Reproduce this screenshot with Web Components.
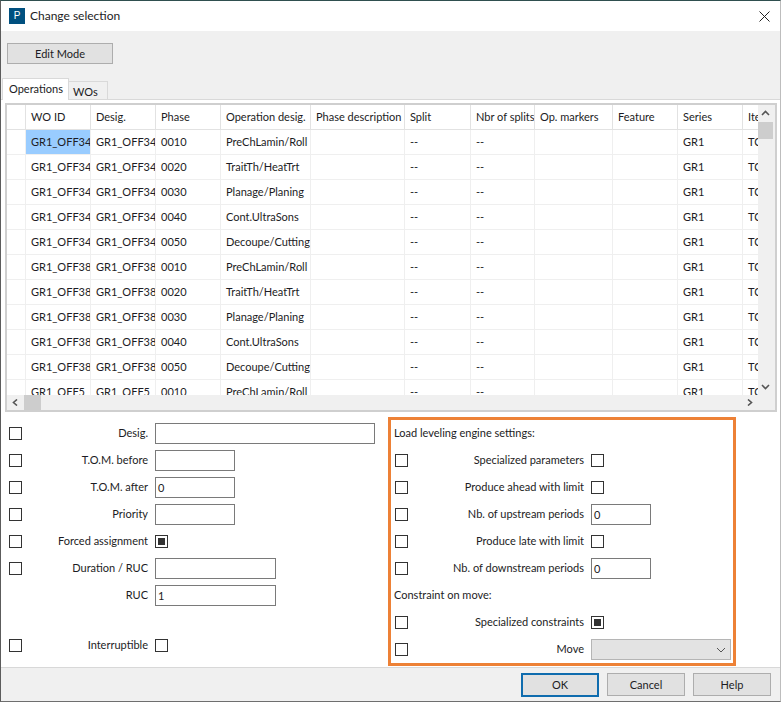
<!DOCTYPE html>
<html>
<head>
<meta charset="utf-8">
<title>Change selection</title>
<style>
  html, body { margin: 0; padding: 0; background: #fff; }
  body { font: 11px "Lato", "Open Sans", sans-serif; color: #1a1a1a; }
</style>
</head>
<body>
<sel-dialog></sel-dialog>

<script>
// small helper, every component sets its own shadow content
function shadow(el, html) {
  el.attachShadow({ mode: 'open' }).innerHTML = html;
}

const FONT = 'font: 11px/1 "Lato", "Open Sans", sans-serif; color: #1c1c24;';

class TitleBar extends HTMLElement {
  constructor() {
    super();
    shadow(this, `
      <style>
        :host { display: flex; align-items: center; height: 30px; background: #fff; ${FONT} font-size: 12px; }
        .logo { width: 16px; height: 16px; margin-left: 8px; background: #00507f; color: #fff; font: 10px/16px "Liberation Sans", sans-serif; text-align: center; }
        .name { margin-left: 5px; flex: 1; }
        svg { margin-right: 10px; }
      </style>
      <div class="logo">P</div>
      <div class="name"><slot></slot></div>
      <svg width="11" height="11" viewBox="0 0 11 11"><path d="M.5.5l10 10M10.500.5l-10 10" stroke="#222" stroke-width="1" fill="none"/></svg>
    `);
  }
}

class DlgButton extends HTMLElement {
  constructor() {
    super();
    shadow(this, `
      <style>
        :host { display: flex; align-items: center; justify-content: center; box-sizing: border-box; height: 23px; width: 78px;
          background: #e1e1e1; border: 1px solid #adadad; ${FONT} }
        :host([default]) { border: 2px solid #0f6cae; height: 24px; }
      </style>
      <slot></slot>
    `);
  }
}

class TabStrip extends HTMLElement {
  constructor() {
    super();
    shadow(this, `
      <style>
        :host { display: flex; align-items: flex-end; box-sizing: border-box; height: 21px; padding-left: 1px; ${FONT} border-bottom: 1px solid #d9d9d9; }
        div { box-sizing: border-box; display: flex; align-items: center; }
        .on { width: 67px; height: 22px; margin-bottom: -1px; background: #fff; border: 1px solid #d9d9d9; border-bottom: 0; padding: 0 0 2px 6px; }
        .off { width: 39px; height: 18px; background: #f0f0f0; border: 1px solid #d9d9d9; border-left: 0; border-bottom: 0; padding: 1px 0 0 4px; }
      </style>
      <div class="on">Operations</div>
      <div class="off">WOs</div>
    `);
  }
}

class ScrollBar extends HTMLElement {
  constructor() {
    super();
    const v = this.hasAttribute('vertical');
    shadow(this, `
      <style>
        :host { display: flex; flex-direction: ${v ? 'column' : 'row'}; background: #f0f0f0; }
        .arrow { flex: none; width: ${v ? 15 : 17}px; height: ${v ? 17 : 15}px; display: flex; align-items: center; justify-content: center; }
        .thumb { flex: none; background: #cdcdcd; ${v ? 'height: 17px; width: 15px;' : 'width: 17px; height: 15px;'} }
        .track { flex: 1; }
      </style>
      <div class="arrow"><svg width="9" height="7" viewBox="0 0 9 7">
        <path d="${v ? 'M1 5l3.500-3.500L8 5' : 'M6 .5L2.500 3.500 6 6.500'}" fill="none" stroke="#555" stroke-width="1.600"/></svg></div>
      <div class="thumb"></div>
      <div class="track"></div>
      <div class="arrow"><svg width="9" height="7" viewBox="0 0 9 7">
        <path d="${v ? 'M1 2l3.500 3.500L8 2' : 'M3 .5L6.500 3.500 3 6.500'}" fill="none" stroke="#555" stroke-width="1.600"/></svg></div>
    `);
  }
}

// widths of the columns, the row header first
const COLS = [19, 65, 65, 65, 90, 94, 66, 64, 78, 65, 65, 60];
const HEADS = ['', 'WO ID', 'Desig.', 'Phase', 'Operation desig.', 'Phase description', 'Split', 'Nbr of splits', 'Op. markers', 'Feature', 'Series', 'Item'];
const OPS = ['PreChLamin/Roll', 'TraitTh/HeatTrt', 'Planage/Planing', 'Cont.UltraSons', 'Decoupe/Cutting'];
const PHASES = ['0010', '0020', '0030', '0040', '0050'];

class OpGrid extends HTMLElement {
  constructor() {
    super();
    const tpl = COLS.map(w => w + 'px').join(' ');
    let rows = '';
    const all = [];
    for (const wo of ['GR1_OFF34', 'GR1_OFF38']) {
      OPS.forEach((op, i) => all.push([wo, PHASES[i], op]));
    }
    all.push(['GR1_OFF5', '0010', OPS[0]]);
    all.forEach((r, idx) => {
      const cells = ['', r[0], r[0], r[1], r[2], '', '--', '--', '', '', 'GR1', 'TC'];
      rows += `<div class="row">` + cells.map((c, i) =>
        `<div class="cell${idx === 0 && i === 1 ? ' cur' : ''}">${c}</div>`).join('') + `</div>`;
    });
    shadow(this, `
      <style>
        :host { display: grid; grid-template-columns: 1fr 17px; grid-template-rows: 1fr 15px; box-sizing: border-box;
          height: 309px; border: 2px solid #cfcfcf; ${FONT} background: #fff; }
        .view { overflow: hidden; min-width: 0; min-height: 0; }
        .row { display: grid; grid-template-columns: ${tpl}; height: 25px; }
        .cell { box-sizing: border-box; white-space: nowrap; overflow: hidden; padding: 0 0 0 5px; line-height: 24px;
          border-right: 1px solid #efefef; border-bottom: 1px solid #efefef; }
        .row.head .cell { height: 25px; line-height: 23px; border-right-color: #e2e2e2; border-bottom-color: #e2e2e2; }
        .cur { background: #99ccff; }
        .corner { background: #f0f0f0; }
      </style>
      <div class="view">
        <div class="row head">${HEADS.map(h => `<div class="cell">${h}</div>`).join('')}</div>
        ${rows}
      </div>
      <scroll-bar vertical></scroll-bar>
      <scroll-bar></scroll-bar>
      <div class="corner"></div>
    `);
  }
}

class CheckBox extends HTMLElement {
  constructor() {
    super();
    shadow(this, `
      <style>
        :host { display: inline-flex; flex: none; box-sizing: border-box; width: 13px; height: 13px; border: 1px solid #333; background: #fff;
          align-items: center; justify-content: center; }
        :host([checked])::before { content: ""; width: 7px; height: 7px; background: #333; }
      </style>
    `);
  }
}

class TextBox extends HTMLElement {
  constructor() {
    super();
    shadow(this, `
      <style>
        :host { display: flex; align-items: center; flex: none; box-sizing: border-box; height: 21px; border: 1px solid #7a7a7a; background: #fff;
          padding: 0 0 1px 2px; ${FONT} }
      </style>
      <slot></slot>
    `);
  }
}

class ComboBox extends HTMLElement {
  constructor() {
    super();
    shadow(this, `
      <style>
        :host { display: flex; align-items: center; justify-content: flex-end; flex: none; box-sizing: border-box; width: 140px; height: 21px;
          border: 1px solid #b5b5b5; background: #e3e3e3; padding-right: 4px; }
      </style>
      <svg width="10" height="6" viewBox="0 0 10 6"><path d="M1 1l4 4 4-4" fill="none" stroke="#555" stroke-width="1"/></svg>
    `);
  }
}

// one line of the form: optional tick on the left, label, then the control in the slot
class FormRow extends HTMLElement {
  constructor() {
    super();
    shadow(this, `
      <style>
        :host { display: grid; grid-template-columns: 13px var(--label-w, 120px) 1fr; align-items: center; height: 27px; ${FONT} }
        .tick { display: flex; }
        .lbl { text-align: right; padding-right: 7px; padding-bottom: 2px; white-space: nowrap; }
      </style>
      <div class="tick"><slot name="tick"></slot></div>
      <div class="lbl"><slot name="label"></slot></div>
      <div style="display:flex"><slot></slot></div>
    `);
  }
}

class SelDialog extends HTMLElement {
  constructor() {
    super();
    const row = (tick, label, ctl) => `<form-row>
        ${tick ? '<check-box slot="tick"></check-box>' : ''}
        <span slot="label">${label}</span>${ctl}</form-row>`;
    const box = (w, v) => `<text-box style="width:${w}px">${v}</text-box>`;
    shadow(this, `
      <style>
        :host { display: flex; flex-direction: column; box-sizing: border-box; width: 781px; height: 702px;
          border-top: 1px solid #2f4f4f; border-left: 1px solid #5c5c5c; border-bottom: 1px solid #6e6e6e; border-right: 1px solid #bdbdbd; ${FONT} background: #fff; }
        .tools { height: 48px; background: #f0f0f0; box-sizing: border-box; padding: 12px 0 0 6px; }
        .tabs { background: #f0f0f0; }
        .body { background: #fff; padding: 3px 3px 0 4px; }
        .form { flex: 1; background: #fff; display: flex; padding: 5px 0 0 8px; }
        .left { width: 379px; padding-top: 3px; --label-w: 133px; }
        .right { box-sizing: border-box; width: 348px; height: 249px; border: 3px solid #ed8136; padding: 0 0 0 4px; --label-w: 183px; }
        .cap { height: 27px; line-height: 25px; margin-left: -1px; }
        .gap { height: 23px; }
        .foot { box-sizing: border-box; height: 34px; border-top: 1px solid #d8d8d8; background: #f0f0f0; display: flex; justify-content: flex-end; align-items: center; gap: 8px; padding: 0 9px 0 0; }
      </style>
      <title-bar>Change selection</title-bar>
      <div class="tools"><dlg-button style="width:106px;height:21px">Edit Mode</dlg-button></div>
      <div class="tabs"><tab-strip></tab-strip></div>
      <div class="body"><op-grid></op-grid></div>
      <div class="form">
        <div class="left">
          ${row(1, 'Desig.', box(220, ''))}
          ${row(1, 'T.O.M. before', box(80, ''))}
          ${row(1, 'T.O.M. after', box(80, '0'))}
          ${row(1, 'Priority', box(80, ''))}
          ${row(1, 'Forced assignment', '<check-box checked></check-box>')}
          ${row(1, 'Duration / RUC', box(121, ''))}
          ${row(0, 'RUC', box(121, '1'))}
          <div class="gap"></div>
          ${row(1, 'Interruptible', '<check-box></check-box>')}
        </div>
        <div class="right">
          <div class="cap">Load leveling engine settings:</div>
          ${row(1, 'Specialized parameters', '<check-box></check-box>')}
          ${row(1, 'Produce ahead with limit', '<check-box></check-box>')}
          ${row(1, 'Nb. of upstream periods', box(60, '0'))}
          ${row(1, 'Produce late with limit', '<check-box></check-box>')}
          ${row(1, 'Nb. of downstream periods', box(60, '0'))}
          <div class="cap">Constraint on move:</div>
          ${row(1, 'Specialized constraints', '<check-box checked></check-box>')}
          ${row(1, 'Move', '<combo-box></combo-box>')}
        </div>
      </div>
      <div class="foot">
        <dlg-button default>OK</dlg-button>
        <dlg-button>Cancel</dlg-button>
        <dlg-button>Help</dlg-button>
      </div>
    `);
  }
}

customElements.define('title-bar', TitleBar);
customElements.define('dlg-button', DlgButton);
customElements.define('tab-strip', TabStrip);
customElements.define('scroll-bar', ScrollBar);
customElements.define('op-grid', OpGrid);
customElements.define('check-box', CheckBox);
customElements.define('text-box', TextBox);
customElements.define('combo-box', ComboBox);
customElements.define('form-row', FormRow);
customElements.define('sel-dialog', SelDialog);
</script>
</body>
</html>
